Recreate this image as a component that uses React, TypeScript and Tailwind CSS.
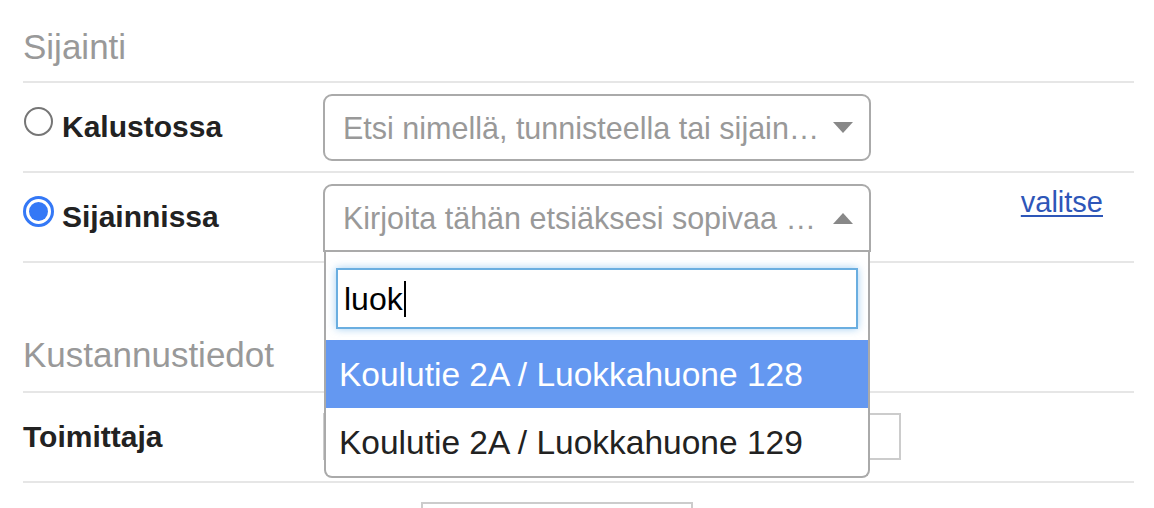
import React from 'react'

const font = { fontFamily: '"Liberation Sans", Arial, sans-serif' }

function Radio({ checked }: { checked?: boolean }) {
  if (checked) {
    return (
      <span className="flex h-[31px] w-[31px] shrink-0 items-center justify-center rounded-full border-[3px] border-[#3478f6] bg-white">
        <span className="h-[19px] w-[19px] rounded-full bg-[#3478f6]" />
      </span>
    )
  }
  return <span className="block h-[29px] w-[29px] shrink-0 rounded-full border-2 border-[#767676] bg-white" />
}

function Caret({ up }: { up?: boolean }) {
  return (
    <svg width="20" height="11" viewBox="0 0 20 11" className="shrink-0">
      {up ? <path d="M0 11 L10 0 L20 11 Z" fill="#888" /> : <path d="M0 0 L20 0 L10 11 Z" fill="#888" />}
    </svg>
  )
}

export default function App() {
  return (
    <div className="h-[508px] w-[1154px] overflow-hidden bg-white" style={font}>
      <div className="relative ml-[23px] w-[1111px]">
        {/* Sijainti header */}
        <div className="h-[83px] border-b-2 border-[#e6e6e6] pt-[30px]">
          <h2 className="text-[35px] leading-[34px] text-[#999999]">Sijainti</h2>
        </div>

        {/* Kalustossa */}
        <div className="flex h-[90px] border-b-2 border-[#e6e6e6]">
          <div className="flex w-[300px] items-start">
            <span className="ml-[1px] mt-[24px] block">
              <Radio />
            </span>
            <span className="ml-[9px] mt-[29px] text-[30px] font-bold leading-[30px] text-[#222]">Kalustossa</span>
          </div>
          <div className="mt-[11px] flex h-[67px] w-[548px] items-center justify-between rounded-[9px] border-2 border-[#aaaaaa] pl-[18px] pr-[16px]">
            <span className="whitespace-nowrap text-[30.5px] leading-[30px] text-[#999999]">Etsi nimellä, tunnisteella tai sijain…</span>
            <Caret />
          </div>
        </div>

        {/* Sijainnissa */}
        <div className="flex h-[90px] border-b-2 border-[#e6e6e6]">
          <div className="flex w-[300px] items-start">
            <span className="mt-[23px]">
              <Radio checked />
            </span>
            <span className="ml-[8px] mt-[29px] text-[30px] font-bold leading-[30px] text-[#222]">Sijainnissa</span>
          </div>
          <div className="mt-[11px] h-[68px] w-[548px]">
            <div className="flex h-[68px] items-center justify-between rounded-t-[9px] border-2 border-[#aaaaaa] pl-[18px] pr-[16px]">
              <span className="whitespace-nowrap text-[30.5px] leading-[30px] text-[#999999]">Kirjoita tähän etsiäksesi sopivaa …</span>
              <Caret up />
            </div>
          </div>
          <div className="flex flex-1 justify-end pr-[31px] pt-[15px]">
            <a href="#" className="text-[29px] leading-[29px] text-[#2e56b8] underline decoration-2 underline-offset-[3px]">
              valitse
            </a>
          </div>
        </div>

        {/* Kustannustiedot header */}
        <div className="h-[130px] border-b-2 border-[#e6e6e6] pt-[75px]">
          <h2 className="text-[35px] leading-[34px] text-[#999999]">Kustannustiedot</h2>
        </div>

        {/* Toimittaja */}
        <div className="flex h-[90px] border-b-2 border-[#e6e6e6]">
          <div className="w-[300px] pt-[29px]">
            <span className="text-[30px] font-bold leading-[30px] text-[#222]">Toimittaja</span>
          </div>
          <div className="mt-[20px] h-[47px] w-[578px] border-2 border-[#cccccc]" />
        </div>

        <div className="flex h-[25px]">
          <div className="ml-[398px] mt-[19px] h-[40px] w-[272px] border-2 border-[#cccccc]" />
        </div>

        {/* open dropdown */}
        <div className="absolute left-[301px] top-[252px] w-[546px] rounded-b-[8px] border-2 border-t-0 border-[#aaaaaa] bg-white">
          <div className="px-[10px] pb-[11px] pt-[16px]">
            <div className="flex h-[61px] items-center border-2 border-[#6aaee0] pl-[6px] shadow-[0_0_8px_rgba(102,175,233,0.6)]">
              <span className="text-[32px] leading-[32px] text-black">luok</span>
              <span className="ml-[1px] h-[36px] w-[2px] bg-black" />
            </div>
          </div>
          <div className="flex h-[68px] items-center bg-[#6498f1] pl-[13px] text-[33.5px] leading-[33px] text-white">
            Koulutie 2A / Luokkahuone 128
          </div>
          <div className="flex h-[68px] items-center pl-[13px] text-[33.5px] leading-[33px] text-[#222]">
            Koulutie 2A / Luokkahuone 129
          </div>
        </div>
      </div>
    </div>
  )
}
